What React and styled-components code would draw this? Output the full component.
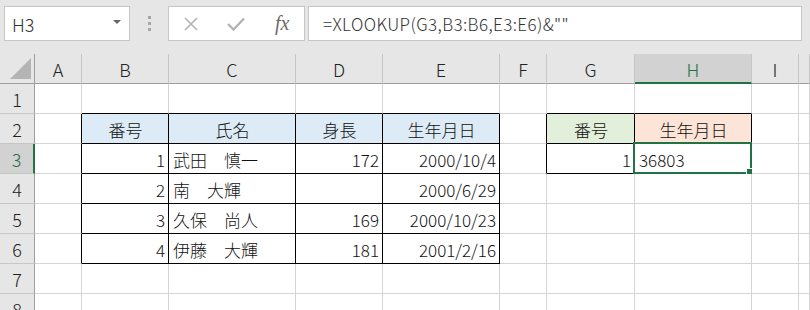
import React from "react";
import styled, { createGlobalStyle } from "styled-components";

const GlobalStyle = createGlobalStyle`
  html, body {
    margin: 0;
    padding: 0;
    background: #ffffff;
    overflow: hidden;
  }
`;

const FONT = `"Noto Sans CJK JP", "Noto Sans", sans-serif`;
const GREEN = "#217346";
const GRID = "#d4d4d4";

const Page = styled.div`
  width: 810px;
  height: 310px;
  overflow: hidden;
  font-family: ${FONT};
  font-weight: 300;
`;

const Toolbar = styled.div`
  height: 54px;
  box-sizing: border-box;
  padding: 6px 8px 0 4px;
  background: #e6e6e6;
  display: flex;
  align-items: flex-start;
`;

const NameBox = styled.div`
  width: 126px;
  height: 35px;
  box-sizing: border-box;
  background: #fff;
  border: 1px solid #c6c6c6;
  display: flex;
  align-items: center;
  justify-content: space-between;
  padding: 0 8px 0 7px;
  font-size: 18px;
  color: #333;
`;

const Caret = styled.span`
  width: 0;
  height: 0;
  border-left: 4px solid transparent;
  border-right: 4px solid transparent;
  border-top: 4px solid #666;
  margin-top: -3px;
`;

const Dots = styled.div`
  width: 38px;
  height: 35px;
  display: flex;
  flex-direction: column;
  align-items: center;
  justify-content: center;
  gap: 3px;
  span {
    width: 3px;
    height: 3px;
    background: #a6a6a6;
  }
`;

const FxBox = styled.div`
  width: 137px;
  height: 35px;
  box-sizing: border-box;
  background: #fff;
  border: 1px solid #c6c6c6;
  display: flex;
  align-items: center;
  padding-left: 14px;
  gap: 28px;
`;

const FxText = styled.span`
  font-family: "Liberation Serif", serif;
  font-style: italic;
  font-size: 20px;
  color: #6a6a6a;
  margin-left: 2px;
`;

const FormulaBox = styled.div`
  flex: 1;
  margin-left: 3px;
  height: 35px;
  box-sizing: border-box;
  background: #fff;
  border: 1px solid #c6c6c6;
  display: flex;
  align-items: center;
  padding-left: 14px;
  font-size: 17px;
  letter-spacing: 0.4px;
  color: #333;
  white-space: nowrap;
`;

const Sheet = styled.div`
  display: grid;
  grid-template-columns: 35px 47px 87px 127px 87px 117px 47px 88px 117px 47px 1fr;
  grid-auto-rows: 30px;
`;

const HeadCell = styled.div`
  box-sizing: border-box;
  background: ${(p) => (p.$active ? "#d2d2d2" : "#e6e6e6")};
  color: ${(p) => (p.$active ? GREEN : "#222")};
  border-right: ${(p) => (p.$activeRow ? `2px solid ${GREEN}` : `1px solid ${p.$row ? "#9e9e9e" : "#c6c6c6"}`)};
  border-bottom: ${(p) => (p.$activeCol ? `2px solid ${GREEN}` : `1px solid ${p.$row ? "#c6c6c6" : "#9e9e9e"}`)};
  display: flex;
  align-items: center;
  justify-content: center;
  font-size: 18px;
  padding-top: 1px;
`;

const Corner = styled.div`
  box-sizing: border-box;
  background: #e6e6e6;
  border-right: 1px solid #9e9e9e;
  border-bottom: 1px solid #9e9e9e;
  display: flex;
  align-items: flex-end;
  justify-content: flex-end;
  padding: 0 3px 4px 0;
  &::after {
    content: "";
    width: 21px;
    height: 21px;
    background: #b4b4b4;
    clip-path: polygon(100% 0, 100% 100%, 0 100%);
  }
`;

const Cell = styled.div`
  position: relative;
  box-sizing: border-box;
  background: ${(p) => p.$fill || "#fff"};
  border-right: 1px solid ${(p) => p.$br};
  border-bottom: 1px solid ${(p) => p.$bb};
  display: flex;
  align-items: center;
  justify-content: ${(p) => p.$align};
  padding: 1px 3px 0 4px;
  font-size: 17px;
  color: #111;
  white-space: nowrap;
`;

const Selection = styled.div`
  position: absolute;
  top: -2px;
  left: -2px;
  right: -1px;
  bottom: -1px;
  border: 2px solid ${GREEN};
  pointer-events: none;
  &::after {
    content: "";
    position: absolute;
    right: -4px;
    bottom: -4px;
    width: 6px;
    height: 6px;
    background: ${GREEN};
    border: 1px solid #fff;
  }
`;

const COLS = ["A", "B", "C", "D", "E", "F", "G", "H", "I", ""];
const ROWS = [1, 2, 3, 4, 5, 6, 7, 8];

const BLUE = "#ddebf7";
const cells = {
  B2: { v: "番号", a: "center", f: BLUE },
  C2: { v: "氏名", a: "center", f: BLUE },
  D2: { v: "身長", a: "center", f: BLUE },
  E2: { v: "生年月日", a: "center", f: BLUE },
  B3: { v: "1", a: "flex-end" },
  C3: { v: "武田　慎一" },
  D3: { v: "172", a: "flex-end" },
  E3: { v: "2000/10/4", a: "flex-end" },
  B4: { v: "2", a: "flex-end" },
  C4: { v: "南　大輝" },
  E4: { v: "2000/6/29", a: "flex-end" },
  B5: { v: "3", a: "flex-end" },
  C5: { v: "久保　尚人" },
  D5: { v: "169", a: "flex-end" },
  E5: { v: "2000/10/23", a: "flex-end" },
  B6: { v: "4", a: "flex-end" },
  C6: { v: "伊藤　大輝" },
  D6: { v: "181", a: "flex-end" },
  E6: { v: "2001/2/16", a: "flex-end" },
  G2: { v: "番号", a: "center", f: "#e2efda" },
  H2: { v: "生年月日", a: "center", f: "#fce4d6" },
  G3: { v: "1", a: "flex-end" },
  H3: { v: "36803" },
};

const inTable = (c, r) =>
  (c >= 1 && c <= 4 && r >= 2 && r <= 6) || (c >= 6 && c <= 7 && r >= 2 && r <= 3);

function XIcon() {
  return (
    <svg width="16" height="16" viewBox="0 0 16 16">
      <path d="M2 2 L14 14 M14 2 L2 14" stroke="#b3b3b3" strokeWidth="1.6" fill="none" />
    </svg>
  );
}

function CheckIcon() {
  return (
    <svg width="18" height="14" viewBox="0 0 18 14">
      <path d="M1 7 L6.5 12.5 L17 1.5" stroke="#b3b3b3" strokeWidth="2.4" fill="none" />
    </svg>
  );
}

export default function App() {
  return (
    <Page>
      <GlobalStyle />
      <Toolbar>
        <NameBox>
          <span>H3</span>
          <Caret />
        </NameBox>
        <Dots>
          <span />
          <span />
          <span />
        </Dots>
        <FxBox>
          <XIcon />
          <CheckIcon />
          <FxText>fx</FxText>
        </FxBox>
        <FormulaBox>=XLOOKUP(G3,B3:B6,E3:E6)&amp;""</FormulaBox>
      </Toolbar>
      <Sheet>
        <Corner />
        {COLS.map((c) => (
          <HeadCell key={c || "J"} $active={c === "H"} $activeCol={c === "H"}>
            {c}
          </HeadCell>
        ))}
        {ROWS.map((r) => (
          <React.Fragment key={r}>
            <HeadCell $row $active={r === 3} $activeRow={r === 3}>
              {r}
            </HeadCell>
            {COLS.map((c, ci) => {
              const key = c + r;
              const d = cells[key] || {};
              const br = inTable(ci, r) || inTable(ci + 1, r) ? "#000" : GRID;
              const bb = inTable(ci, r) || inTable(ci, r + 1) ? "#000" : GRID;
              return (
                <Cell key={key || "J" + r} $br={br} $bb={bb} $fill={d.f} $align={d.a || "flex-start"}>
                  {d.v}
                  {key === "H3" && <Selection />}
                </Cell>
              );
            })}
          </React.Fragment>
        ))}
      </Sheet>
    </Page>
  );
}
